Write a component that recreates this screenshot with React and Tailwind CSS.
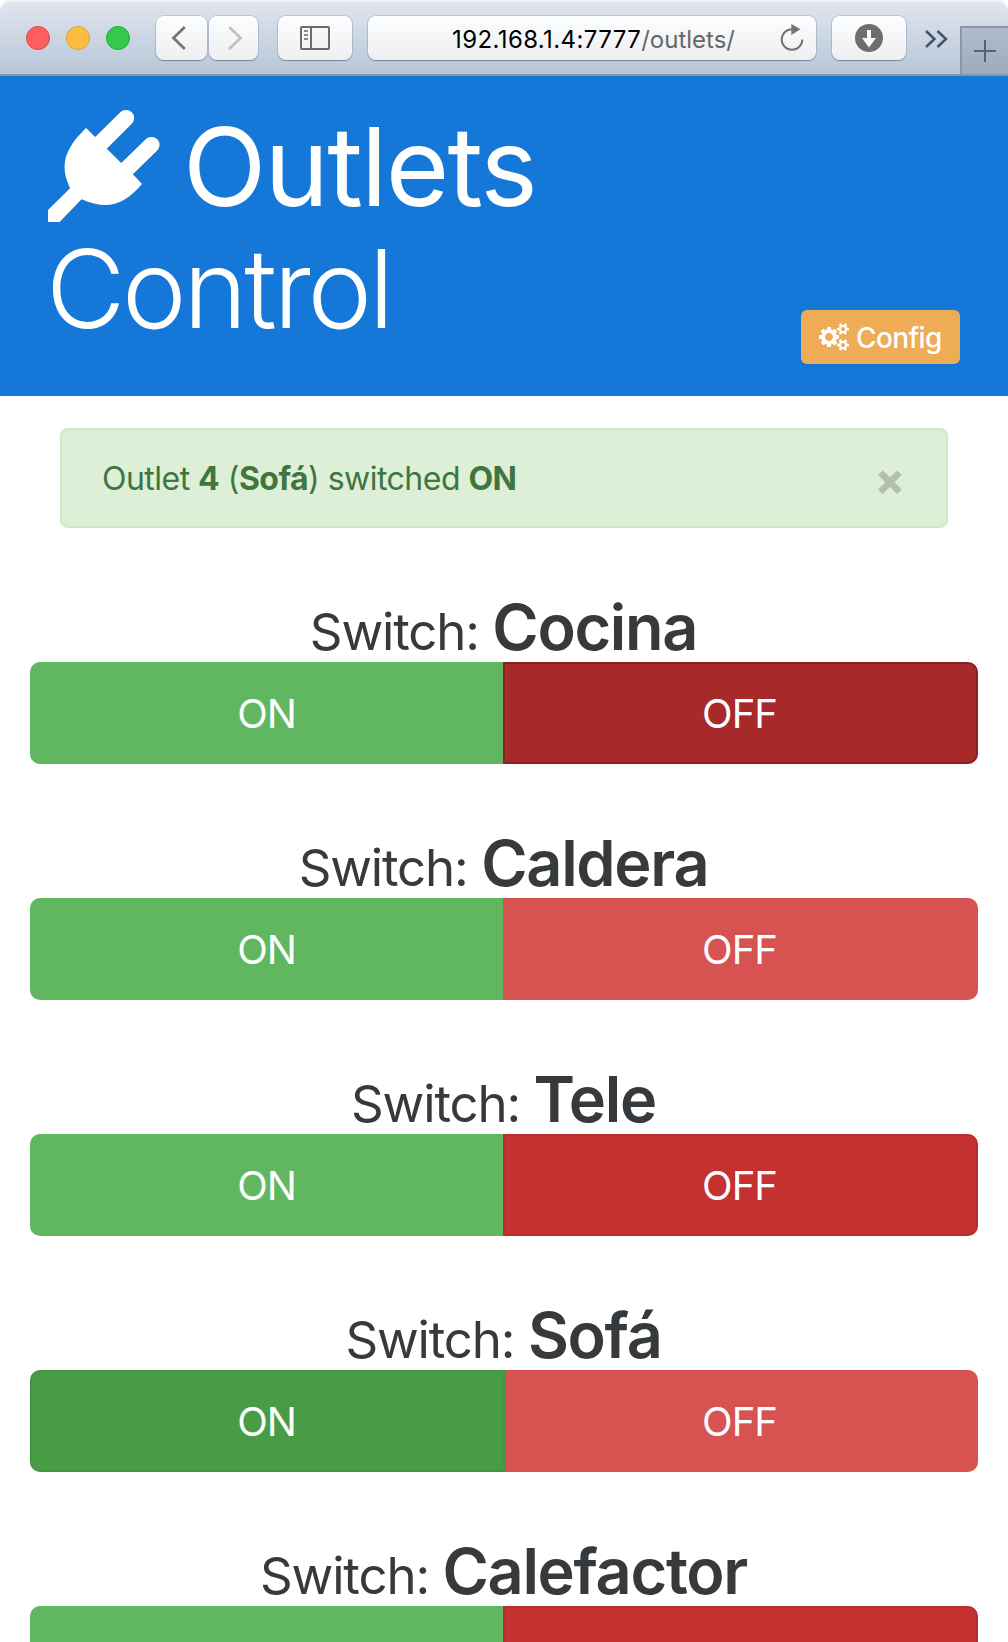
import React from "react";

const SWITCHES = [
  { name: "Cocina", on: "idle", off: "focus", labels: true },
  { name: "Caldera", on: "idle", off: "idle", labels: true },
  { name: "Tele", on: "idle", off: "active", labels: true },
  { name: "Sofá", on: "active", off: "idle", labels: true },
  { name: "Calefactor", on: "idle", off: "active", labels: false },
];

const ON_STYLES = {
  idle: "bg-[#60b760] border-[#60b760]",
  active: "z-10 bg-[#489c46] border-[#429543]",
};

const OFF_STYLES = {
  idle: "bg-[#d75352] border-[#d75352]",
  active: "z-10 bg-[#c53131] border-[#b92d2c]",
  focus: "z-10 bg-[#a82929] border-[#8a2022]",
};

const TOOL =
  "flex h-11 shrink-0 items-center justify-center rounded-[8px] bg-gradient-to-b from-[#fcfdfe] to-[#eeeff1] shadow-[0_0_0_1px_rgba(120,140,170,0.3),0_1px_1px_rgba(70,85,110,0.6)]";

function Toolbar() {
  return (
    <div className="flex h-[76px] items-start overflow-hidden rounded-t-[10px] border-b-2 border-[#8494a9] bg-gradient-to-b from-[#e0e6ef] to-[#b8c7d8] shadow-[inset_0_2px_0_rgba(255,255,255,0.5)]">
      <div className="mt-[26px] ml-[26px] flex gap-4">
        <span className="size-6 rounded-full border border-[#e2443f] bg-[#fd605c]" />
        <span className="size-6 rounded-full border border-[#dfa034] bg-[#fdbd41]" />
        <span className="size-6 rounded-full border border-[#25a935] bg-[#34c94a]" />
      </div>
      <div className="mt-4 ml-[26px] flex gap-[2px]">
        <div className={`${TOOL} w-[51px]`}>
          <svg width="51" height="44" viewBox="0 0 51 44" fill="none" stroke="#757575" strokeWidth="2.8">
            <path d="M28.8 11 17.5 22l11.3 11" />
          </svg>
        </div>
        <div className={`${TOOL} w-[49px]`}>
          <svg width="49" height="44" viewBox="0 0 49 44" fill="none" stroke="#c2c2c2" strokeWidth="2.8">
            <path d="M20.2 11 31.5 22 20.2 33" />
          </svg>
        </div>
      </div>
      <div className={`${TOOL} mt-4 ml-5 w-[74px]`}>
        <svg width="30" height="24" viewBox="0 0 30 24" fill="none" stroke="#6c6c6c" strokeWidth="2">
          <rect x="1" y="1" width="28" height="22" rx="1" />
          <path d="M11 1v22" />
          <path d="M4 5h4M4 9h4M4 13h4" stroke="#8a8a8a" />
        </svg>
      </div>
      <div className={`${TOOL} mt-4 ml-4 w-[448px] pr-[12px]`}>
        <div className="ml-[84px] flex-1 pt-[3px] text-[24px] leading-[44px] whitespace-nowrap text-[#676767]">
          <span className="tracking-[0.4px] text-black">192.168.1.4:7777</span>
          <span className="font-[430]">/outlets/</span>
        </div>
        <svg width="24" height="28" viewBox="0 0 24 28">
          <path d="M12 5.2A10.3 10.3 0 1 0 22.3 15.5" fill="none" stroke="#757575" strokeWidth="2" />
          <path d="M11.3 0 20.5 5.3 11.3 11z" fill="#757575" />
        </svg>
      </div>
      <div className={`${TOOL} mt-4 ml-4 w-[74px]`}>
        <svg width="28" height="28" viewBox="0 0 28 28">
          <circle cx="14" cy="14" r="14" fill="#6e6e6e" />
          <path d="M12 6h4v8h5l-7 9.500-7-9.500h5z" fill="#fafafa" />
        </svg>
      </div>
      <svg className="mt-[30px] ml-[19px] shrink-0" width="23" height="18" viewBox="0 0 23 18" fill="none" stroke="#465264" strokeWidth="2.5">
        <path d="M1 1 9.500 9 1 17M12.500 1 21 9l-8.500 8" />
      </svg>
      <div className="mt-[26px] ml-3 flex h-12 w-12 shrink-0 items-start border-t-2 border-l-2 border-[#8796aa] bg-gradient-to-b from-[#b0bccb] to-[#9eabbd]">
        <svg className="mt-3 ml-3" width="22" height="22" viewBox="0 0 22 22" stroke="#566172" strokeWidth="2">
          <path d="M11 0v22M0 11h22" />
        </svg>
      </div>
    </div>
  );
}

function PlugIcon() {
  return (
    <svg className="mt-[33px] shrink-0" width="113" height="113" viewBox="54 57 333 339" preserveAspectRatio="none" fill="#fff">
      <path d="M166 114 193 141 267 67A24 24 0 0 1 301 101L227 176 270 219 345 145A24 24 0 0 1 378 179L304 253 331 282C285 337 235 366 153 328L88 396H53V361L119 295C85 224 106 173 166 114Z" />
    </svg>
  );
}

function CogsIcon() {
  return (
    <svg width="30" height="28" viewBox="0 0 1920 1792" fill="#fff">
      <path d="M896 896q0-106-75-181t-181-75-181 75-75 181 75 181 181 75 181-75 75-181zm768 512q0-52-38-90t-90-38-90 38-38 90q0 53 37.500 90.500t90.500 37.500 90.500-37.500 37.500-90.500zm0-1024q0-52-38-90t-90-38-90 38-38 90q0 53 37.500 90.500t90.500 37.500 90.500-37.500 37.500-90.500zm-384 421v185q0 10-7 19.500t-16 10.500l-155 24q-11 35-32 76 34 48 90 115 7 11 7 20 0 12-7 19-23 30-82.500 89.500t-78.500 59.500q-11 0-21-7l-115-90q-37 19-77 31-11 108-23 155-7 24-30 24h-186q-11 0-20-7.500t-10-17.500l-23-153q-34-10-75-31l-118 89q-7 7-20 7-11 0-21-8-144-133-144-160 0-9 7-19 10-14 41-53t47-61q-23-44-35-82l-152-24q-10-1-17-9.500t-7-19.500v-185q0-10 7-19.500t16-10.500l155-24q11-35 32-76-34-48-90-115-7-11-7-20 0-12 7-20 22-30 82-89t79-59q11 0 21 7l115 90q34-18 77-32 11-108 23-154 7-24 30-24h186q11 0 20 7.500t10 17.500l23 153q34 10 75 31l118-89q8-7 20-7 11 0 21 8 144 133 144 160 0 8-7 19-12 16-42 54t-45 60q23 48 34 82l152 23q10 2 17 10.500t7 19.500zm640 533v140q0 16-149 31-12 27-30 52 51 113 51 138 0 4-4 7-122 71-124 71-8 0-46-47t-52-68q-20 2-30 2t-30-2q-14 21-52 68t-46 47q-2 0-124-71-4-3-4-7 0-25 51-138-18-25-30-52-149-15-149-31v-140q0-16 149-31 13-29 30-52-51-113-51-138 0-4 4-7 4-2 35-20t59-34 30-16q8 0 46 46.500t52 67.500q20-2 30-2t30 2q51-71 92-112l6-2q4 0 124 70 4 3 4 7 0 25-51 138 17 23 30 52 149 15 149 31zm0-1024v140q0 16-149 31-12 27-30 52 51 113 51 138 0 4-4 7-122 71-124 71-8 0-46-47t-52-68q-20 2-30 2t-30-2q-14 21-52 68t-46 47q-2 0-124-71-4-3-4-7 0-25 51-138-18-25-30-52-149-15-149-31v-140q0-16 149-31 13-29 30-52-51-113-51-138 0-4 4-7 4-2 35-20t59-34 30-16q8 0 46 46.500t52 67.500q20-2 30-2t30 2q51-71 92-112l6-2q4 0 124 70 4 3 4 7 0 25-51 138 17 23 30 52 149 15 149 31z" />
    </svg>
  );
}

function Header() {
  return (
    <header className="flex h-80 items-end justify-between bg-[#1577d7] px-12 pb-8 text-white">
      <h1 className="h-72 text-[109px] leading-[122px]">
        <span className="flex h-[146px] items-start">
          <PlugIcon />
          <span className="mt-[29px] ml-[22px] font-[380] tracking-[-1.8px]">Outlets</span>
        </span>
        <span className="mt-[5px] -ml-[2px] block font-light tracking-[-3.3px]">Control</span>
      </h1>
      <button className="flex h-[54px] w-[159px] items-center rounded-[6px] bg-[#eeac57] pl-[18px] text-[28px] font-[450]">
        <CogsIcon />
        <span className="ml-[7px] pt-[2px] tracking-[-0.6px]">Config</span>
      </button>
    </header>
  );
}

function Alert() {
  return (
    <div className="mx-[60px] mt-8 flex h-[100px] items-center justify-between rounded-[8px] border-2 border-[#d1e8c6] bg-[#deefd8] pt-[2px] pr-[41px] pl-10 text-[32px] text-[#3e763e]">
      <p className="font-[420] whitespace-nowrap tracking-[-0.52px]">
        Outlet <b>4</b> (<b>Sofá</b>) switched <b>ON</b>
      </p>
      <button className="text-[44px] leading-none font-extrabold text-[#b1c1ae]">×</button>
    </div>
  );
}

function SwitchRow({ item }) {
  return (
    <section className="h-[236px]">
      <h2 className="flex h-[102px] items-baseline justify-center pr-px text-[#373a3c]">
        <span className="text-[51px] leading-[143px] font-[430] tracking-[-1.15px]">Switch:</span>
        <span className="ml-[13.5px] text-[63px] font-[590] tracking-[-1.3px]">{item.name}</span>
      </h2>
      <div className="mx-[30px] flex h-[102px] text-[40px] font-[430] tracking-[-1px] text-white">
        <button className={`relative w-[475px] shrink-0 rounded-l-[10px] border-2 pt-[2px] pr-[2px] ${ON_STYLES[item.on]}`}>
          {item.labels && "ON"}
        </button>
        <button className={`relative -ml-[2px] w-[475px] shrink-0 rounded-r-[10px] border-2 pt-[2px] pr-[2px] ${OFF_STYLES[item.off]}`}>
          {item.labels && "OFF"}
        </button>
      </div>
    </section>
  );
}

export default function App() {
  return (
    <div className="h-[1642px] w-[1008px] overflow-hidden bg-white font-['Inter',sans-serif]">
      <Toolbar />
      <Header />
      <Alert />
      <main className="mt-8">
        {SWITCHES.map((item) => (
          <SwitchRow key={item.name} item={item} />
        ))}
      </main>
    </div>
  );
}
